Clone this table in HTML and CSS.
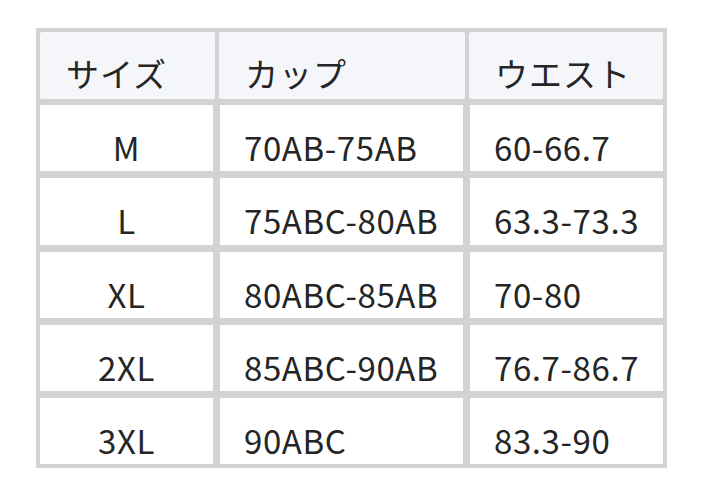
FILE: index.html
```html
<!DOCTYPE html>
<html lang="ja">
<head>
<meta charset="utf-8">
<link rel="stylesheet" href="styles.css">
</head>
<body>
<div class="table">
  <div class="row head">
    <div class="cell">サイズ</div>
    <div class="cell">カップ</div>
    <div class="cell">ウエスト</div>
  </div>
  <div class="body">
    <div class="row">
      <div class="cell c">M</div>
      <div class="cell">70AB-75AB</div>
      <div class="cell">60-66.7</div>
    </div>
    <div class="row">
      <div class="cell c">L</div>
      <div class="cell">75ABC-80AB</div>
      <div class="cell">63.3-73.3</div>
    </div>
    <div class="row">
      <div class="cell c">XL</div>
      <div class="cell">80ABC-85AB</div>
      <div class="cell">70-80</div>
    </div>
    <div class="row">
      <div class="cell c">2XL</div>
      <div class="cell">85ABC-90AB</div>
      <div class="cell">76.7-86.7</div>
    </div>
    <div class="row">
      <div class="cell c">3XL</div>
      <div class="cell">90ABC</div>
      <div class="cell">83.3-90</div>
    </div>
  </div>
</div>
</body>
</html>
```
FILE: styles.css
```css
html, body {
  margin: 0;
  padding: 0;
  background: #ffffff;
}
body {
  padding: 28px 0 0 36px;
  font-family: "Noto Sans CJK JP", "Noto Sans", sans-serif;
  color: #252525;
  font-size: 33px;
}
.table {
  width: 631px;
  background: #d3d3d3;
  padding: 4px 4px 3.5px 4px;
  box-sizing: border-box;
}
.row {
  display: grid;
  grid-template-columns: 173px 243px 193px;
  column-gap: 7px;
}
.head {
  grid-template-columns: 175px 246px 194px;
  column-gap: 4px;
  margin-bottom: 6px;
}
.body {
  display: flex;
  flex-direction: column;
  gap: 7px;
}
.cell {
  background: #ffffff;
  height: 66.3px;
  box-sizing: border-box;
  padding: 26px 0 0 24px;
  line-height: 32px;
  letter-spacing: 0.6px;
  white-space: nowrap;
}
.head .cell {
  background: #f5f6fa;
  height: 67px;
  padding: 25px 0 0 26px;
  letter-spacing: 1px;
  border-radius: 2px;
}
.cell.c {
  padding-left: 0;
  text-align: center;
}
```
